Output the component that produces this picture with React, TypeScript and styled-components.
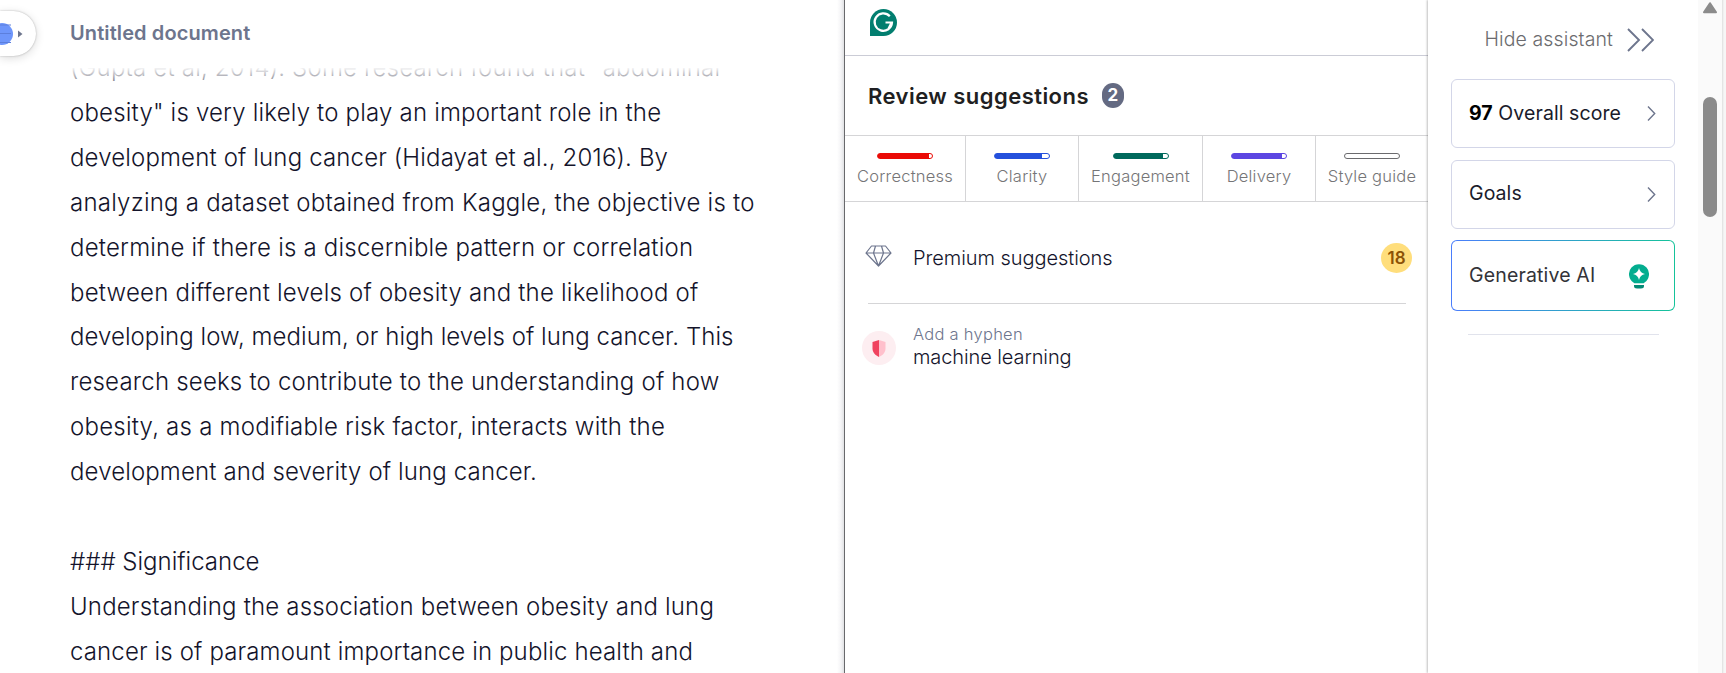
import React from "react";
import styled, { createGlobalStyle } from "styled-components";

const Global = createGlobalStyle`
  *{box-sizing:border-box}
  html,body{margin:0;height:100%;overflow:hidden}
  body{background:#fff;font-family:Inter,"Liberation Sans",sans-serif;color:#14142b}
`;

const Page = styled.div`
  display: grid;
  grid-template-columns: 844px 584px 270px 24px 4px;
  width: 1726px;
  height: 673px;
  overflow: hidden;
`;

const Editor = styled.main`
  position: relative;
  display: flex;
  flex-direction: column;
  overflow: hidden;
  background: linear-gradient(to left, #e0e1e3 0, #f4f4f6 3px, #fff 7px);
`;

const TopBar = styled.header`
  height: 68px;
  flex: none;
  display: flex;
  align-items: flex-start;
`;

const SiteTab = styled.button`
  width: 36px;
  height: 45px;
  margin: 11px 34px 0 0;
  padding: 0;
  border: 0;
  border-radius: 0 23px 23px 0;
  background: #fff;
  box-shadow: 0 0 2px rgba(0, 0, 0, 0.28), 0 2px 10px rgba(0, 0, 0, 0.14);
  display: flex;
  align-items: center;
`;

const DocTitle = styled.h1`
  margin: 18px 0 0;
  font-size: 20px;
  line-height: 30px;
  font-weight: 600;
  letter-spacing: 0.1px;
  color: #6d758d;
`;

const Body = styled.div`
  position: relative;
  flex: 1;
  overflow: hidden;
  padding-left: 70px;
`;

const Fade = styled.div`
  position: absolute;
  inset: 0 20px auto 0;
  height: 16px;
  background: linear-gradient(rgba(255, 255, 255, 0.95), rgba(255, 255, 255, 0.4));
`;

const Lines = styled.div`
  margin-top: -22px;
`;

const Line = styled.div<{ $ls: number }>`
  height: 44.92px;
  line-height: 44.92px;
  font-size: 24px;
  font-weight: 300;
  letter-spacing: ${(p) => p.$ls}px;
  white-space: pre;
`;

const Panel = styled.section`
  border-left: 1px solid #68696c;
  min-width: 0;
  overflow: hidden;
`;

const Brand = styled.div`
  height: 56px;
  border-bottom: 1px solid #cbccd6;
  padding: 9px 0 0 25px;
`;

const Heading = styled.div`
  height: 80px;
  border-bottom: 1px solid #d5d5d7;
  padding: 0 0 0 23px;
  display: flex;
  align-items: center;
  gap: 13px;
`;

const HeadText = styled.h2`
  margin: 1px 0 0;
  font-size: 22px;
  line-height: 30px;
  font-weight: 600;
  letter-spacing: 0.46px;
  color: #1f1f22;
  white-space: nowrap;
`;

const Count = styled.span`
  width: 22px;
  height: 25px;
  border-radius: 11px;
  background: #646a82;
  color: #fff;
  font-size: 17px;
  line-height: 24px;
  font-weight: 700;
  text-align: center;
`;

const Tabs = styled.div`
  display: grid;
  grid-template-columns: 121px 113px 124px 113px 112px;
  height: 66px;
  border-bottom: 1px solid #d5d5d7;
`;

const Tab = styled.div`
  border-right: 1px solid #d5d5d7;
  display: flex;
  flex-direction: column;
  align-items: center;
  padding-top: 17px;
  &:last-child { border-right: 0; }
`;

const Meter = styled.div<{ $color: string; $fill: number }>`
  width: 56px;
  height: 6px;
  border: 1px solid ${(p) => p.$color};
  border-radius: 3px;
  background: linear-gradient(to right, ${(p) => p.$color} ${(p) => p.$fill}px, #fff ${(p) => p.$fill}px);
`;

const TabLabel = styled.span`
  margin-top: 7px;
  font-size: 16.5px;
  line-height: 20px;
  font-weight: 350;
  letter-spacing: 0.22px;
  color: #757577;
  white-space: nowrap;
`;

const Premium = styled.div`
  display: flex;
  align-items: center;
  height: 102px;
  margin: 0 22px 0 23px;
  border-bottom: 1px solid #d5d5d7;
`;

const PremiumText = styled.span`
  margin: 10px 0 0 21px;
  flex: 1;
  font-size: 20px;
  line-height: 28px;
  font-weight: 300;
  letter-spacing: -0.06px;
`;

const Gem = styled.svg`
  margin: 7px 0 0 -3px;
`;

const PremiumCount = styled.span`
  width: 31px;
  height: 30px;
  margin: 10px -6px 0 0;
  border-radius: 50%;
  background: #ffde7c;
  color: #8c5206;
  font-size: 17px;
  line-height: 31px;
  font-weight: 600;
  text-align: center;
`;

const Suggestion = styled.div`
  display: flex;
  padding: 20px 0 0 17px;
`;

const ShieldBadge = styled.span`
  width: 34px;
  height: 34px;
  margin: 7px 17px 0 0;
  border-radius: 50%;
  background: #fdeef1;
  display: grid;
  place-items: center;
`;

const SuggestKind = styled.div`
  font-size: 16.5px;
  line-height: 20px;
  font-weight: 300;
  letter-spacing: 0.26px;
  color: #6d758d;
`;

const SuggestText = styled.div`
  font-size: 20px;
  line-height: 27px;
  font-weight: 300;
  letter-spacing: -0.1px;
`;

const Side = styled.aside`
  padding: 0 23px;
  box-shadow: -1px 0 2px rgba(0, 0, 0, 0.25);
  z-index: 1;
  background: #fff;
`;

const Hide = styled.div`
  height: 79px;
  display: flex;
  align-items: flex-start;
  justify-content: flex-end;
  padding-right: 21px;
  gap: 14px;
  font-size: 19.5px;
  line-height: 28px;
  font-weight: 300;
  letter-spacing: 0.12px;
  color: #6b6b6e;
  span { margin-top: 25px; white-space: nowrap; }
  svg { margin-top: 28px; }
`;

const Card = styled.div<{ $accent?: boolean; $gap: number }>`
  height: ${(p) => (p.$accent ? 71 : 69)}px;
  margin-bottom: ${(p) => p.$gap}px;
  border: 1px solid ${(p) => (p.$accent ? "transparent" : "#d3d6e8")};
  border-radius: 6px;
  background: ${(p) => (p.$accent ? "linear-gradient(#fff,#fff) padding-box, linear-gradient(to right,#4a7dfc,#15c39a) border-box" : "#fff")};
  display: flex;
  align-items: center;
  justify-content: space-between;
  padding: 0 ${(p) => (p.$accent ? 25 : 18)}px 0 17px;
  font-size: 19.5px;
  line-height: 28px;
  font-weight: 400;
  letter-spacing: ${(p) => (p.$accent ? 0.15 : 0.08)}px;
  color: ${(p) => (p.$accent ? "#333338" : "#1a1b2b")};
  white-space: nowrap;
  b { color: #000; font-weight: 700; }
`;

const CardLabel = styled.span<{ $lift: number }>`
  padding-bottom: ${(p) => p.$lift * 2}px;
`;

const Bulb = styled.svg`
  margin-top: 2px;
`;

const SideRule = styled.div`
  height: 1px;
  margin: 0 16px 0 17px;
  background: #e1e3ec;
`;

const Scroll = styled.div`
  background: #fafafa;
  padding: 2px 5px 0;
  z-index: 2;
  svg { display: block; }
`;

const Thumb = styled.div`
  width: 14px;
  height: 120px;
  margin-top: 83px;
  border-radius: 7px;
  background: #8b8b8b;
`;

const Edge = styled.div`
  background: linear-gradient(to right, #dedede, #f6f6f6 2px);
`;

const text: [string, number][] = [
  ["(Gupta et al, 2014). Some research found that \"abdominal", 0.19],
  ["obesity\" is very likely to play an important role in the", 0.19],
  ["development of lung cancer (Hidayat et al., 2016). By", 0.15],
  ["analyzing a dataset obtained from Kaggle, the objective is to", 0.23],
  ["determine if there is a discernible pattern or correlation", 0.21],
  ["between different levels of obesity and the likelihood of", 0.21],
  ["developing low, medium, or high levels of lung cancer. This", 0.06],
  ["research seeks to contribute to the understanding of how", 0.2],
  ["obesity, as a modifiable risk factor, interacts with the", 0.23],
  ["development and severity of lung cancer.", 0.13],
  ["", 0],
  ["### Significance", 0],
  ["Understanding the association between obesity and lung", 0.18],
  ["cancer is of paramount importance in public health and", 0.135],
];

const tabs = [
  { label: "Correctness", color: "#ea0b06", fill: 51 },
  { label: "Clarity", color: "#2450dc", fill: 47 },
  { label: "Engagement", color: "#00695c", fill: 49 },
  { label: "Delivery", color: "#5c46e2", fill: 50 },
  { label: "Style guide", color: "#6b6b6e", fill: 0 },
];

const Chevron = () => (
  <svg width="9" height="15" viewBox="0 0 9 15" fill="none" stroke="#6d758d" strokeWidth="1.4">
    <path d="M1 .5l6.700 7L1 14.500" />
  </svg>
);

export default function App() {
  return (
    <>
      <Global />
      <Page>
        <Editor>
          <TopBar>
            <SiteTab>
              <svg width="24" height="24" viewBox="0 0 24 24">
                <circle cx="2" cy="12" r="11" fill="#6e96fb" />
                <path d="M0 11.500h11M0 3h11M0 20.500h11" stroke="#5c7fdc" strokeWidth="1" />
                <path d="M18 8.500l4.500 3.500-4.500 3.500z" fill="#6d758d" />
              </svg>
            </SiteTab>
            <DocTitle>Untitled document</DocTitle>
          </TopBar>
          <Body>
            <Lines>
              {text.map(([t, ls], i) => (
                <Line key={i} $ls={ls}>{t}</Line>
              ))}
            </Lines>
            <Fade />
          </Body>
        </Editor>
        <Panel>
          <Brand>
            <svg width="27" height="27" viewBox="0 0 27 27">
              <path d="M0 27V13.500A13.500 13.500 0 1 1 13.500 27z" fill="#027e6f" />
              <path d="M19.800 7.300A8.700 8.700 0 1 0 22 13.500h-6.500M18.600 19.600l3-6" fill="none" stroke="#fff" strokeWidth="2.200" />
            </svg>
          </Brand>
          <Heading>
            <HeadText>Review suggestions</HeadText>
            <Count>2</Count>
          </Heading>
          <Tabs>
            {tabs.map((t) => (
              <Tab key={t.label}>
                <Meter $color={t.color} $fill={t.fill} />
                <TabLabel>{t.label}</TabLabel>
              </Tab>
            ))}
          </Tabs>
          <Premium>
            <Gem width="27" height="22" viewBox="0 0 27 22" fill="none" stroke="#6d758d" strokeWidth="1.2" strokeLinejoin="round">
              <path d="M6.500 1h14L26 8 13.500 21 1 8zM1 8h25M10.500 1L8.500 8l5 13 5-13-2-7" />
            </Gem>
            <PremiumText>Premium suggestions</PremiumText>
            <PremiumCount>18</PremiumCount>
          </Premium>
          <Suggestion>
            <ShieldBadge>
              <svg width="14" height="17" viewBox="0 0 14 17">
                <path d="M7 0L.5 2v6.500C.5 12.500 3.500 15.500 7 17z" fill="#f0435f" />
                <path d="M7 0l6.500 2v6.500c0 4-3 7-6.500 8.500z" fill="#ffc0cc" />
              </svg>
            </ShieldBadge>
            <div>
              <SuggestKind>Add a hyphen</SuggestKind>
              <SuggestText>machine learning</SuggestText>
            </div>
          </Suggestion>
        </Panel>
        <Side>
          <Hide>
            <span>Hide assistant</span>
            <svg width="27" height="24" viewBox="0 0 27 24" fill="none" stroke="#6d758d" strokeWidth="1.9">
              <path d="M1 1l11 11L1 23M15 1l11 11-11 11" />
            </svg>
          </Hide>
          <Card $gap={12}>
            <CardLabel $lift={1}><b>97</b> Overall score</CardLabel>
            <Chevron />
          </Card>
          <Card $gap={11}>
            <CardLabel $lift={2}>Goals</CardLabel>
            <Chevron />
          </Card>
          <Card $accent $gap={23}>
            <CardLabel $lift={1}>Generative AI</CardLabel>
            <Bulb width="20" height="25" viewBox="0 0 20 25">
              <path d="M4.500 18.500A10 10 0 1 1 15.500 18.500q-.4.700-1 .700h-9q-.6 0-1-.700z" fill="#03ad8f" />
              <path d="M10 4q1 5 6 6-5 1-6 6-1-5-6-6 5-1 6-6z" fill="#fff" />
              <path d="M5 21h10v1q0 2.500-3 2.500h-4q-3 0-3-2.500z" fill="#038a75" />
            </Bulb>
          </Card>
          <SideRule />
        </Side>
        <Scroll>
          <svg width="14" height="12" viewBox="0 0 14 12">
            <path d="M7 1.200L13 10.200H1z" fill="#8b8b8b" stroke="#8b8b8b" strokeWidth="2" strokeLinejoin="round" />
          </svg>
          <Thumb />
        </Scroll>
        <Edge />
      </Page>
    </>
  );
}
